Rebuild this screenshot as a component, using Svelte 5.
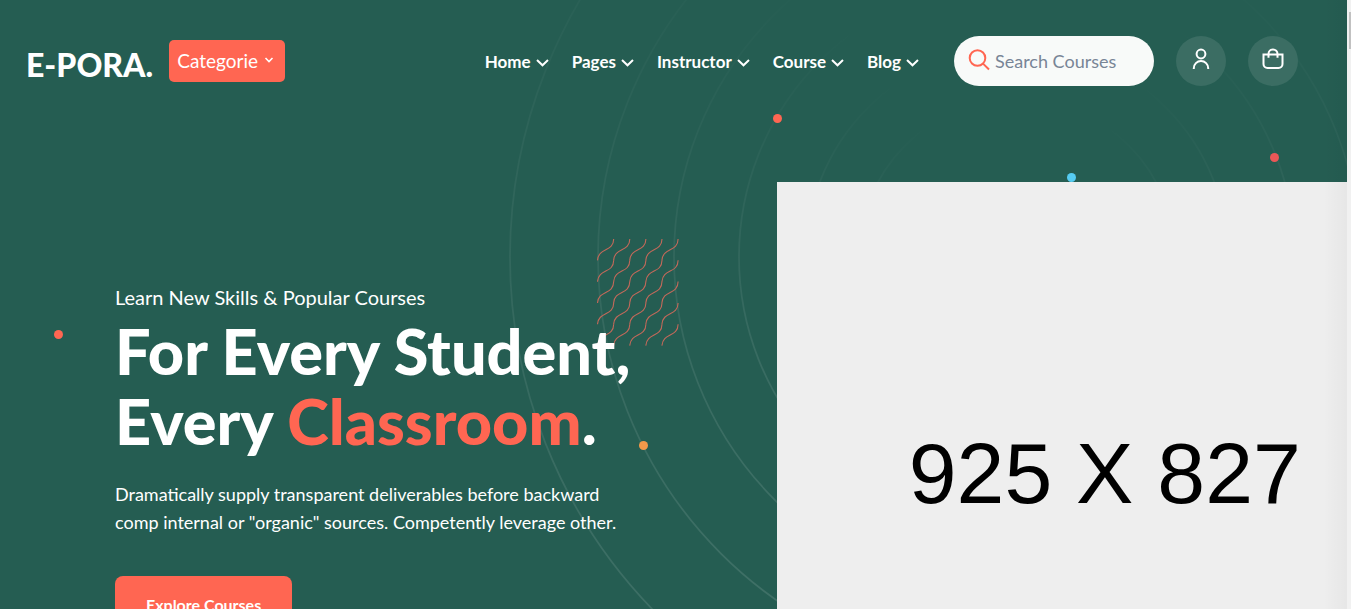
<script>
  const links = ['Home', 'Pages', 'Instructor', 'Course', 'Blog'];
  const rings = [507, 419, 343, 278, 211, 158];
  const cells = [0, 1, 2, 3, 4];
</script>

<div class="page">
  <svg class="rings" viewBox="0 0 1040 1040" aria-hidden="true">
    <defs>
      <linearGradient id="fade" x1="0" y1="0" x2="0" y2="1">
        <stop offset="0.08" stop-color="#fff" stop-opacity="0" />
        <stop offset="0.3" stop-color="#fff" stop-opacity="0.03" />
        <stop offset="0.6" stop-color="#fff" stop-opacity="0.08" />
        <stop offset="1" stop-color="#fff" stop-opacity="0.13" />
      </linearGradient>
    </defs>
    {#each rings as r}
      <circle cx="520" cy="520" {r} fill="none" stroke="url(#fade)" stroke-width="1.7" />
    {/each}
  </svg>
  <svg class="waves" viewBox="0 0 82 108" aria-hidden="true">
    {#each cells as row}
      {#each cells as col}
        <path
          d="M16.2 0C16 13.500 1 8 0 21.400"
          transform="translate({col * 16.1 + 0.5} {row * 21.3})"
          fill="none"
          stroke="#c4695a"
          stroke-width="1.1"
        />
      {/each}
    {/each}
  </svg>
  <span class="dot d1"></span>
  <span class="dot d2"></span>
  <span class="dot d3"></span>
  <span class="dot d4"></span>
  <span class="dot d5"></span>

  <header>
    <a class="logo" href="#home">E-PORA.</a>
    <button class="cat" type="button">
      Categorie
      <svg width="10" height="6" viewBox="0 0 10 6"><path d="M1.500 1L5 4.500 8.500 1" /></svg>
    </button>
    <nav>
      {#each links as link}
        <a href="#{link.toLowerCase()}">
          {link}
          <svg width="13" height="8" viewBox="0 0 13 8"><path d="M1 1L6.500 6.300 12 1" /></svg>
        </a>
      {/each}
    </nav>
    <form class="search" role="search">
      <button type="button" aria-label="Search">
        <svg width="22" height="22" viewBox="0 0 22 22">
          <circle cx="9.500" cy="9" r="7.800" /><path d="M15 14.600L21 20.500" />
        </svg>
      </button>
      <input type="text" placeholder="Search Courses" aria-label="Search Courses" />
    </form>
    <a class="round" href="#account" aria-label="Account">
      <svg width="18" height="22" viewBox="0 0 18 22">
        <circle cx="9" cy="6" r="4.400" /><path d="M1.800 21v-.8a7.200 7.200 0 0 1 14.400 0v.8" />
      </svg>
    </a>
    <a class="round" href="#cart" aria-label="Cart">
      <svg width="22" height="22" viewBox="0 0 22 22">
        <path d="M1.500 6.500h19v9.500a4 4 0 0 1-4 4h-11a4 4 0 0 1-4-4zM6.500 9.800V6a4.500 4.500 0 0 1 9 0v3.800" />
      </svg>
    </a>
  </header>

  <main>
    <section class="copy">
      <p class="sub">Learn New Skills &amp; Popular Courses</p>
      <h1>For Every Student,<br />Every <em>Classroom</em>.</h1>
      <p class="text">
        Dramatically supply transparent deliverables before backward<br />
        comp internal or "organic" sources. Competently leverage other.
      </p>
      <a class="cta" href="#courses">Explore Courses</a>
    </section>
    <section class="media">
      <div class="placeholder">925 X 827</div>
    </section>
  </main>
  <div class="edge"></div>
  <div class="track"><span></span></div>
</div>

<style>
  :global(body) {
    margin: 0;
  }
  .page {
    position: relative;
    box-sizing: border-box;
    height: 100vh;
    padding-right: 4px;
    overflow: hidden;
    background: #255d52;
    color: #fff;
    font-family: Lato, sans-serif;
  }
  a {
    color: inherit;
    text-decoration: none;
  }
  button {
    font: inherit;
    color: inherit;
    border: 0;
    cursor: pointer;
  }
  svg {
    fill: none;
    stroke: currentColor;
    stroke-width: 2;
  }
  header {
    position: relative;
    display: flex;
    align-items: center;
    height: 50px;
    padding: 36px 49px 0 26px;
  }
  .logo {
    margin-top: 8px;
    font-size: 32px;
    line-height: 40px;
    font-weight: 900;
  }
  .cat {
    display: flex;
    align-items: center;
    justify-content: space-between;
    width: 116px;
    height: 42px;
    margin-left: 16px;
    padding: 0 11px 2px 8px;
    border-radius: 5px;
    background: #ff6652;
    font-size: 19px;
  }
  .cat svg {
    stroke-width: 1.6;
  }
  nav {
    display: flex;
    gap: 23px;
    margin-left: auto;
    margin-right: 35px;
    font-size: 17px;
    font-weight: 700;
  }
  nav a {
    display: flex;
    align-items: center;
    gap: 5px;
  }
  nav svg {
    margin-top: 3px;
  }
  .search {
    display: flex;
    align-items: center;
    box-sizing: border-box;
    width: 200px;
    height: 50px;
    padding: 0 14px;
    border-radius: 25px;
    background: #f8faf9;
  }
  .search button {
    display: flex;
    padding: 0;
    margin: 0 5px 3px 0;
    background: none;
    color: #ff6652;
  }
  .search input {
    min-width: 0;
    flex: 1;
    padding: 0;
    border: 0;
    outline: 0;
    background: none;
    color: #6d7a8c;
    font: 18px Lato, sans-serif;
  }
  .search input::placeholder {
    color: #788596;
  }
  .round {
    display: flex;
    align-items: center;
    justify-content: center;
    box-sizing: border-box;
    width: 50px;
    height: 50px;
    margin-left: 22px;
    padding-bottom: 4px;
    border-radius: 50%;
    background: #3b6d63;
  }
  main {
    position: relative;
    display: grid;
    grid-template-columns: 15fr 11fr;
    margin-top: 96px;
  }
  .copy {
    padding: 101px 0 0 115px;
    white-space: nowrap;
  }
  p,
  h1 {
    margin: 0;
  }
  .sub {
    font-size: 20px;
    line-height: 28px;
  }
  h1 {
    margin-top: 5px;
    font-size: 63px;
    line-height: 70px;
    font-weight: 900;
  }
  em {
    color: #ff6652;
    font-style: normal;
  }
  .text {
    margin-top: 24px;
    font-size: 18px;
    line-height: 28px;
  }
  .cta {
    display: inline-block;
    margin-top: 40px;
    padding: 0 31px;
    border-radius: 8px;
    background: #ff6652;
    font-size: 16px;
    line-height: 58px;
    font-weight: 700;
  }
  .media {
    overflow: hidden;
  }
  .placeholder {
    display: flex;
    align-items: center;
    justify-content: center;
    width: 115%;
    aspect-ratio: 925 / 827;
    background: #eee;
    color: #000;
    font-family: 'Liberation Sans', Arial, sans-serif;
    font-size: 86px;
    line-height: 90px;
    padding-bottom: 4px;
    box-sizing: border-box;
  }
  .rings {
    position: absolute;
    left: 497px;
    top: -263px;
    width: 1040px;
    height: 1040px;
  }
  .waves {
    position: absolute;
    left: 597px;
    top: 239px;
    width: 82px;
    height: 108px;
  }
  .dot {
    position: absolute;
    width: 9px;
    height: 9px;
    border-radius: 50%;
    background: #ff6652;
  }
  .d1 {
    left: 54px;
    top: 330px;
  }
  .d2 {
    left: 773px;
    top: 114px;
  }
  .d3 {
    left: 1067px;
    top: 173px;
    background: #56ccf2;
  }
  .d4 {
    left: 1270px;
    top: 153px;
    background: #eb5757;
  }
  .d5 {
    left: 639px;
    top: 441px;
    background: #f2994a;
  }
  .edge {
    position: absolute;
    top: 0;
    right: 4px;
    bottom: 0;
    width: 24px;
    background: linear-gradient(to right, transparent, rgba(0, 0, 0, 0.03));
  }
  .track {
    position: absolute;
    top: 0;
    right: 0;
    bottom: 0;
    width: 4px;
    background: #f1f1f1;
  }
  .track span {
    display: block;
    height: 37px;
    margin: 12px 0 0 2px;
    background: #c1c1c1;
  }
</style>
